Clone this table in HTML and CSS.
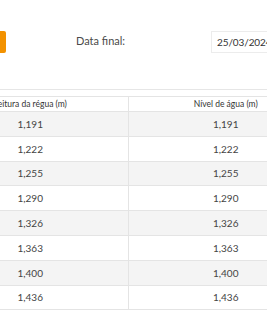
FILE: index.html
```html
<!DOCTYPE html>
<html lang="pt">
<head>
<meta charset="utf-8">
<link rel="stylesheet" href="styles.css">
</head>
<body>
<div class="page">
  <div class="toolbar">
    <button class="btn" type="button"></button>
    <label class="label">Data final:</label>
    <div class="date">25/03/2024</div>
  </div>
  <hr class="rule">
  <table class="data">
    <thead>
      <tr><th>Leitura da régua (m)</th><th>Nível de água (m)</th></tr>
    </thead>
    <tbody>
      <tr><td>1,191</td><td>1,191</td></tr>
      <tr><td>1,222</td><td>1,222</td></tr>
      <tr><td>1,255</td><td>1,255</td></tr>
      <tr><td>1,290</td><td>1,290</td></tr>
      <tr><td>1,326</td><td>1,326</td></tr>
      <tr><td>1,363</td><td>1,363</td></tr>
      <tr><td>1,400</td><td>1,400</td></tr>
      <tr><td>1,436</td><td>1,436</td></tr>
    </tbody>
  </table>
</div>
</body>
</html>
```
FILE: styles.css
```css
html, body {
  margin: 0;
  padding: 0;
  background: #fff;
  overflow: hidden;
}
body {
  font-family: Lato, "Open Sans", sans-serif;
  color: #444;
}
.page {
  margin-left: -68px;
  width: 392px;
}
.toolbar {
  display: flex;
  align-items: flex-start;
  padding-top: 31px;
  height: 23px;
}
.btn {
  width: 40px;
  height: 22px;
  margin-left: 34px;
  border: 0;
  border-radius: 2px;
  background: #f39200;
  padding: 0;
}
.label {
  width: 135px;
  margin-left: 70px;
  margin-top: 3px;
  font-size: 11px;
  line-height: 13px;
  color: #4a4a4a;
}
.date {
  width: 100px;
  height: 22px;
  box-sizing: border-box;
  border: 1px solid #ececec;
  padding: 0 0 0 5px;
  font-size: 10px;
  letter-spacing: -0.1px;
  line-height: 20px;
  color: #333;
}
.rule {
  margin: 35px 0 0;
  border: 0;
  border-top: 1px solid #e6e6e6;
  height: 0;
}
.data {
  margin-top: 6px;
  width: 392px;
  border-collapse: collapse;
  table-layout: fixed;
}
.data th, .data td {
  text-align: center;
  border: 1px solid #e4e4e4;
  padding: 0;
}
.data th {
  font-weight: normal;
  font-size: 8.5px;
  color: #333;
  height: 14px;
  line-height: 14px;
}
.data td {
  font-size: 10px;
  height: 23.8px;
  color: #444;
}
.data tbody tr:nth-child(odd) td {
  background: #f4f4f4;
}
```
